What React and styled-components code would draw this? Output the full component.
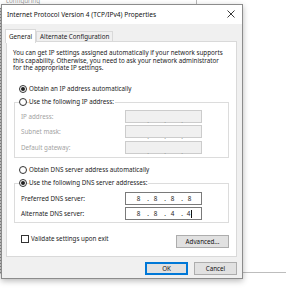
import React from 'react';
import styled, { createGlobalStyle } from 'styled-components';

const GlobalStyle = createGlobalStyle`
  html, body {
    margin: 0;
    padding: 0;
    background: #ffffff;
  }
  body {
    font-family: 'Noto Sans', 'Open Sans', sans-serif;
    font-size: 6.25px;
    color: #1a1a1a;
  }
`;

const Desktop = styled.div`
  position: relative;
  width: 286px;
  height: 300px;
  overflow: hidden;
  background: #ffffff;
`;

const BackWindowEdge = styled.div`
  position: absolute;
  left: 196px;
  top: 0;
  width: 1px;
  height: 5px;
  background: #b8b8b8;
`;

const BackWindowBottom = styled.div`
  position: absolute;
  left: 240px;
  top: 272px;
  width: 46px;
  height: 1px;
  background: #bdbdbd;
`;

const BackWindowLeft = styled.div`
  position: absolute;
  left: 0;
  top: 8px;
  width: 2px;
  height: 266px;
  background: repeating-linear-gradient(#8a8a8a 0 1px, #d0d0d0 1px 3px);
`;

const BackText = styled.div`
  position: absolute;
  left: 6px;
  top: -4px;
  color: #9a9a9a;
`;

const Window = styled.div`
  position: absolute;
  left: 1px;
  top: 4px;
  width: 240px;
  height: 273px;
  background: #f0f0f0;
  border: 1px solid #8c8c8c;
  box-shadow: 0 2px 6px rgba(0, 0, 0, 0.28);
  display: flex;
  flex-direction: column;
`;

const TitleBar = styled.div`
  height: 18px;
  background: #ffffff;
  display: flex;
  align-items: center;
  justify-content: space-between;
  padding: 0 6px 1px 5px;
  font-size: 6.55px;
  color: #111;
`;

const CloseIcon = styled.svg`
  width: 8px;
  height: 8px;
  margin-right: 1px;
  margin-top: -1px;
`;

const Body = styled.div`
  flex: 1;
  display: flex;
  flex-direction: column;
  padding: 5px 5px 0 3px;
`;

const TabRow = styled.div`
  display: flex;
  align-items: flex-end;
  height: 13px;
  position: relative;
  z-index: 1;
`;

const Tab = styled.div`
  height: ${(p) => (p.$active ? 14 : 11)}px;
  padding: 0 3px ${(p) => (p.$active ? 1 : 0)}px;
  display: flex;
  align-items: center;
  background: ${(p) => (p.$active ? '#ffffff' : '#f0f0f0')};
  border: 1px solid #d9d9d9;
  border-bottom: ${(p) => (p.$active ? 'none' : '1px solid #d9d9d9')};
  margin-left: ${(p) => (p.$active ? 0 : -1)}px;
  margin-right: ${(p) => (p.$active ? 1 : 0)}px;
  margin-bottom: ${(p) => (p.$active ? -1 : 0)}px;
  box-sizing: border-box;
`;

const Panel = styled.div`
  margin-left: 1px;
  width: 231px;
  height: 216px;
  box-sizing: border-box;
  background: #ffffff;
  border: 1px solid #d9d9d9;
  margin-top: -1px;
  padding: 7px 6px 0 6px;
  display: flex;
  flex-direction: column;
`;

const Intro = styled.p`
  margin: 0 0 10px 0;
  line-height: 7.7px;
  white-space: nowrap;
`;

const OptionRow = styled.div`
  display: flex;
  align-items: center;
  gap: 2px;
  height: 13px;
  padding-left: 6px;
  margin-top: ${(p) => p.$top || 0}px;
  position: relative;
  z-index: 1;
  & > span.label {
    background: #fff;
    padding-right: 1px;
  }
`;

const Radio = styled.span`
  width: 8px;
  height: 8px;
  box-sizing: border-box;
  border-radius: 50%;
  border: 1px solid #333;
  background: #fff;
  display: flex;
  align-items: center;
  justify-content: center;
  flex-shrink: 0;
  &::after {
    content: '';
    width: 4px;
    height: 4px;
    border-radius: 50%;
    background: ${(p) => (p.$checked ? '#222' : 'transparent')};
  }
`;

const GroupBox = styled.div`
  margin: -6.5px 0 0 1px;
  width: 215px;
  box-sizing: border-box;
  border: 1px solid #dcdcdc;
  padding: ${(p) => p.$pad};
  display: flex;
  flex-direction: column;
  gap: ${(p) => p.$gap}px;
`;

const FieldRow = styled.div`
  display: flex;
  align-items: center;
  justify-content: space-between;
  padding: 0 26px 0 6px;
  color: ${(p) => (p.$disabled ? '#a3a3a3' : '#1a1a1a')};
`;

const IpBox = styled.div`
  width: 77px;
  height: 13px;
  box-sizing: border-box;
  border: 1px solid ${(p) => (p.$disabled ? '#cccccc' : '#7a7a7a')};
  background: ${(p) => (p.$disabled ? '#f0f0f0' : '#ffffff')};
  display: grid;
  grid-template-columns: repeat(4, 1fr);
  align-items: center;
  padding: 0 3px 0 4px;
`;

const Octet = styled.span`
  position: relative;
  text-align: center;
  color: #222;
  &:not(:last-child)::after {
    content: '.';
    position: absolute;
    right: -2px;
    color: ${(p) => (p.$disabled ? '#9a9a9a' : '#222')};
  }
`;

const Caret = styled.span`
  display: inline-block;
  width: 1px;
  height: 8px;
  background: #111;
  vertical-align: middle;
  margin-left: 1px;
`;

const BottomRow = styled.div`
  display: flex;
  align-items: center;
  justify-content: space-between;
  margin-top: 12px;
  padding: 0 1px 0 8px;
`;

const CheckLabel = styled.label`
  display: flex;
  align-items: center;
  gap: 2px;
  margin-top: -5px;
`;

const Checkbox = styled.span`
  width: 8px;
  height: 8px;
  box-sizing: border-box;
  border: 1px solid #333;
  background: #fff;
`;

const Button = styled.button`
  font-family: inherit;
  font-size: 6.25px;
  color: #111;
  width: ${(p) => p.$w}px;
  height: 13px;
  padding: 0;
  background: #e1e1e1;
  border: 1px solid ${(p) => (p.$default ? '#0078d7' : '#adadad')};
  box-shadow: ${(p) => (p.$default ? 'inset 0 0 0 1px #0078d7' : 'none')};
  border-radius: 0;
`;

const Footer = styled.div`
  display: flex;
  justify-content: flex-end;
  gap: 6px;
  padding: 5px 0 0 0;
`;

function IpField({ values, disabled, caret }) {
  const octets = values || ['', '', '', ''];
  return (
    <IpBox $disabled={disabled}>
      {octets.map((v, i) => (
        <Octet key={i} $disabled={disabled}>
          {v}
          {caret && i === 3 && <Caret />}
        </Octet>
      ))}
    </IpBox>
  );
}

export default function App() {
  return (
    <>
      <GlobalStyle />
      <Desktop>
        <BackText>configuring</BackText>
        <BackWindowEdge />
        <BackWindowLeft />
        <BackWindowBottom />
        <Window>
          <TitleBar>
            <span>Internet Protocol Version 4 (TCP/IPv4) Properties</span>
            <CloseIcon viewBox="0 0 8 8">
              <path d="M0.5 0.5 L7.5 7.5 M7.5 0.5 L0.5 7.5" stroke="#222" strokeWidth="0.9" />
            </CloseIcon>
          </TitleBar>
          <Body>
            <TabRow>
              <Tab $active>General</Tab>
              <Tab>Alternate Configuration</Tab>
            </TabRow>
            <Panel>
              <Intro>
                You can get IP settings assigned automatically if your network supports
                <br />
                this capability. Otherwise, you need to ask your network administrator
                <br />
                for the appropriate IP settings.
              </Intro>
              <OptionRow>
                <Radio $checked />
                <span className="label">Obtain an IP address automatically</span>
              </OptionRow>
              <OptionRow>
                <Radio />
                <span className="label">Use the following IP address:</span>
              </OptionRow>
              <GroupBox $pad="7px 0 3px 0" $gap={2.5}>
                <FieldRow $disabled>
                  <span>IP address:</span>
                  <IpField disabled />
                </FieldRow>
                <FieldRow $disabled>
                  <span>Subnet mask:</span>
                  <IpField disabled />
                </FieldRow>
                <FieldRow $disabled>
                  <span>Default gateway:</span>
                  <IpField disabled />
                </FieldRow>
              </GroupBox>
              <OptionRow $top={5.7}>
                <Radio />
                <span className="label">Obtain DNS server address automatically</span>
              </OptionRow>
              <OptionRow>
                <Radio $checked />
                <span className="label">Use the following DNS server addresses:</span>
              </OptionRow>
              <GroupBox $pad="8px 0 2px 0" $gap={2}>
                <FieldRow>
                  <span>Preferred DNS server:</span>
                  <IpField values={['8', '8', '8', '8']} />
                </FieldRow>
                <FieldRow>
                  <span>Alternate DNS server:</span>
                  <IpField values={['8', '8', '4', '4']} caret />
                </FieldRow>
              </GroupBox>
              <BottomRow>
                <CheckLabel>
                  <Checkbox />
                  <span>Validate settings upon exit</span>
                </CheckLabel>
                <Button $w={53}>Advanced...</Button>
              </BottomRow>
            </Panel>
            <Footer>
              <Button $w={43} $default>OK</Button>
              <Button $w={43}>Cancel</Button>
            </Footer>
          </Body>
        </Window>
      </Desktop>
    </>
  );
}
